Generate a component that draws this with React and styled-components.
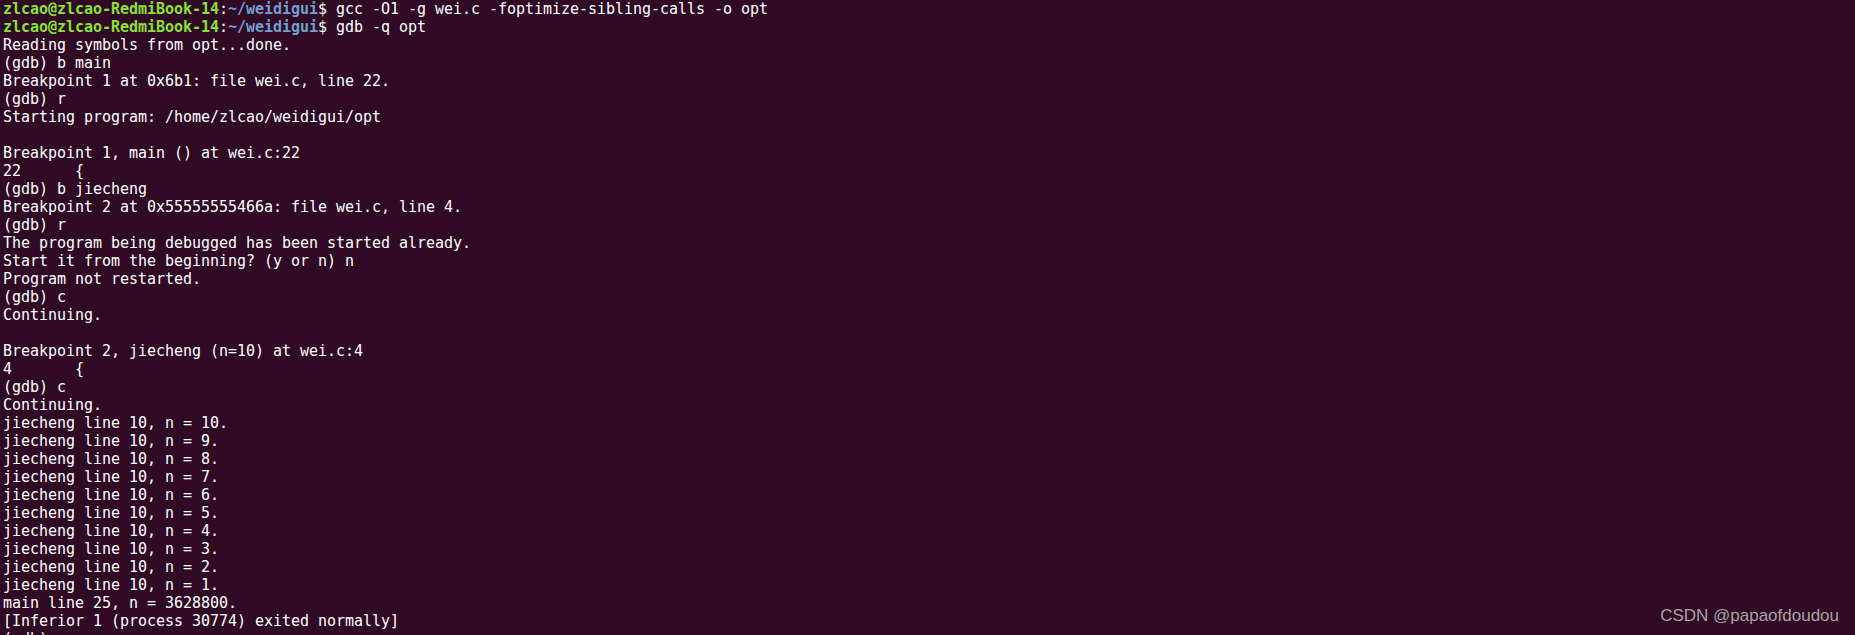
import styled, { createGlobalStyle } from 'styled-components'

const GlobalStyle = createGlobalStyle`
    html, body {
        margin: 0;
        padding: 0;
        background: #300a24;
    }
`

const StyledTerminal = styled.div`
    position: relative;
    width: 1855px;
    height: 635px;
    overflow: hidden;
    background-color: #300a24;
    color: #ffffff;
    font-family: "DejaVu Sans Mono", "Liberation Mono", monospace;
    font-size: 15px;
    letter-spacing: -0.03px;
    padding: 0 0 0 3px;
    box-sizing: border-box;
`
const StyledLine = styled.div`
    height: 18px;
    line-height: 18px;
    white-space: pre;
`
const StyledUser = styled.span`
    color: #8ae234;
    font-weight: bold;
`
const StyledPath = styled.span`
    color: #729fcf;
    font-weight: bold;
`
const StyledWatermark = styled.div`
    position: absolute;
    right: 16px;
    bottom: 9px;
    font-family: "Liberation Sans", Arial, sans-serif;
    font-size: 17px;
    letter-spacing: 0;
    color: #a9a1a7;
`

const Prompt = ({ cmd }) => (
    <StyledLine>
        <StyledUser>zlcao@zlcao-RedmiBook-14</StyledUser>:<StyledPath>~/weidigui</StyledPath>$ {cmd}
    </StyledLine>
)

const output = [
    'Reading symbols from opt...done.',
    '(gdb) b main',
    'Breakpoint 1 at 0x6b1: file wei.c, line 22.',
    '(gdb) r',
    'Starting program: /home/zlcao/weidigui/opt',
    '',
    'Breakpoint 1, main () at wei.c:22',
    '22\t{',
    '(gdb) b jiecheng',
    'Breakpoint 2 at 0x55555555466a: file wei.c, line 4.',
    '(gdb) r',
    'The program being debugged has been started already.',
    'Start it from the beginning? (y or n) n',
    'Program not restarted.',
    '(gdb) c',
    'Continuing.',
    '',
    'Breakpoint 2, jiecheng (n=10) at wei.c:4',
    '4\t{',
    '(gdb) c',
    'Continuing.',
    ...[10, 9, 8, 7, 6, 5, 4, 3, 2, 1].map(n => `jiecheng line 10, n = ${n}.`),
    'main line 25, n = 3628800.',
    '[Inferior 1 (process 30774) exited normally]',
    '(gdb) ',
]

export default function App() {
    return (
        <>
            <GlobalStyle />
            <StyledTerminal>
                <Prompt cmd="gcc -O1 -g wei.c -foptimize-sibling-calls -o opt" />
                <Prompt cmd="gdb -q opt" />
                {output.map((text, i) => (
                    <StyledLine key={i} style={{ tabSize: 8 }}>{text}</StyledLine>
                ))}
                <StyledWatermark>CSDN @papaofdoudou</StyledWatermark>
            </StyledTerminal>
        </>
    )
}
